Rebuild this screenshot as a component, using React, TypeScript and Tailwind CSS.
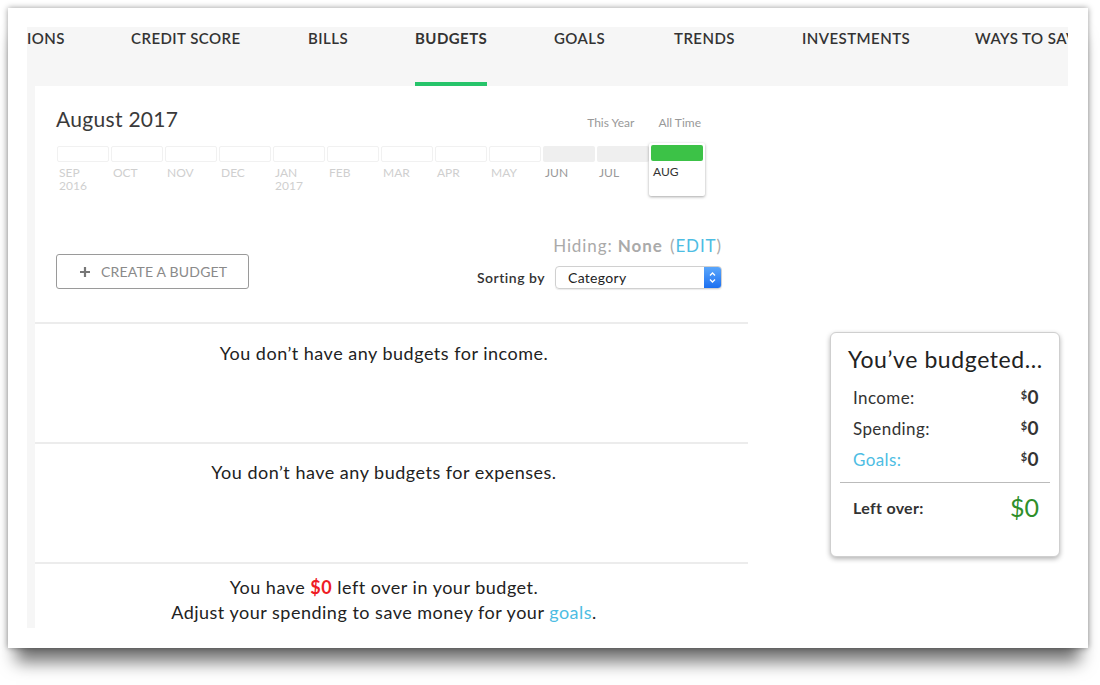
import React from "react";

const months = [
  { m: "SEP", y: "2016", state: "empty" },
  { m: "OCT", state: "empty" },
  { m: "NOV", state: "empty" },
  { m: "DEC", state: "empty" },
  { m: "JAN", y: "2017", state: "empty" },
  { m: "FEB", state: "empty" },
  { m: "MAR", state: "empty" },
  { m: "APR", state: "empty" },
  { m: "MAY", state: "empty" },
  { m: "JUN", state: "gray" },
  { m: "JUL", state: "gray" },
  { m: "AUG", state: "active" },
];

const navItems = [
  { label: "IONS", w: "w-[104px]" },
  { label: "CREDIT SCORE", w: "w-[177px]" },
  { label: "BILLS", w: "w-[107px]" },
  { label: "BUDGETS", w: "w-[139px]", active: true },
  { label: "GOALS", w: "w-[120px]" },
  { label: "TRENDS", w: "w-[128px]" },
  { label: "INVESTMENTS", w: "w-[173px]" },
  { label: "WAYS TO SAVE", w: "w-[140px]" },
];

function Money() {
  return (
    <span className="font-bold text-[#333]">
      <span className="text-[11px] align-[5px]">$</span>
      <span className="text-[19px]">0</span>
    </span>
  );
}

export default function App() {
  return (
    <div
      className="w-[1100px] h-[685px] bg-white overflow-hidden pl-[8px] pt-[8px]"
      style={{ fontFamily: "Lato, 'Noto Sans', sans-serif" }}
    >
      <div className="w-[1080px] h-[640px] bg-white pl-[19px] pr-[20px] pt-[19px] shadow-[0_0_6px_rgba(0,0,0,0.4),0_22px_16px_-8px_rgba(0,0,0,0.55)]">
        <div className="h-[601px] flex flex-col overflow-hidden">
          {/* NAV */}
          <div className="h-[59px] bg-[#f6f6f6] flex overflow-hidden whitespace-nowrap shrink-0">
            {navItems.map((n) => (
              <div key={n.label} className={`${n.w} shrink-0 flex flex-col`}>
                <div className="inline-flex flex-col self-start h-full">
                  <span
                    className={`pt-[1px] text-[15px] leading-[20px] text-[#333] tracking-[0.45px] ${
                      n.active ? "font-bold" : "font-semibold"
                    }`}
                  >
                    {n.label}
                  </span>
                  <div className="flex-1" />
                  {n.active && <div className="h-[4px] bg-[#26c46a]" />}
                </div>
              </div>
            ))}
          </div>

          {/* BODY */}
          <div className="flex flex-1 min-h-0">
            <div className="w-[8px] bg-[#f6f6f6] shrink-0" />
            <div className="flex flex-1 bg-white">
              {/* main column */}
              <div className="w-[713px] shrink-0 flex flex-col">
                <div className="pl-[21px] w-[687px]">
                  {/* header */}
                  <div className="flex items-end justify-between w-[646px] pt-[20px]">
                    <span className="text-[21px] leading-[26px] text-[#3a3a3a] tracking-[0.3px]">August 2017</span>
                    <div className="flex gap-[24px] text-[12px] text-[#999] pr-[1px]">
                      <span>This Year</span>
                      <span>All Time</span>
                    </div>
                  </div>
                  {/* months */}
                  <div className="flex gap-[2px] mt-[14px] pl-[1px]">
                    {months.map((mo) =>
                      mo.state === "active" ? (
                        <div
                          key={mo.m}
                          className="w-[52px] -mt-[3px] -ml-[2px] p-[2px] h-[49px] bg-white rounded-[2px] shadow-[0_1px_3px_rgba(0,0,0,0.35)] box-content"
                        >
                          <div className="h-[16px] bg-[#3cc247] rounded-[2px]" />
                          <div className="text-[12px] leading-[13px] text-[#333] mt-[4px] pl-[2px]">{mo.m}</div>
                        </div>
                      ) : (
                        <div key={mo.m} className="w-[52px]">
                          <div
                            className={`h-[16px] rounded-[2px] ${
                              mo.state === "gray" ? "bg-[#efefef]" : "border border-[#f1f1f1]"
                            }`}
                          />
                          <div
                            className={`text-[12px] leading-[13px] mt-[4px] pl-[2px] ${
                              mo.state === "gray" ? "text-[#999]" : "text-[#cfcfcf]"
                            }`}
                          >
                            {mo.m}
                            {mo.y && <div>{mo.y}</div>}
                          </div>
                        </div>
                      )
                    )}
                  </div>
                  {/* controls */}
                  <div className="flex items-end justify-between w-[666px] mt-[40px]">
                    <button className="w-[193px] h-[35px] border border-[#9a9a9a] rounded-[3px] flex items-center pl-[22px] gap-[10px] text-[14px] text-[#8a8a8a]">
                      <svg width="12" height="12" viewBox="0 0 12 12">
                        <path d="M6 1v10M1 6h10" stroke="#777" strokeWidth="2.2" />
                      </svg>
                      <span className="tracking-[0.2px]">CREATE A BUDGET</span>
                    </button>
                    <div className="flex flex-col items-end">
                      <div className="text-[17px] leading-[20px] text-[#aaa] tracking-[0.9px]">
                        Hiding: <span className="font-bold">None</span>{" "}
                        <span className="ml-[2px]">
                          (<span className="text-[#4dbde3]">EDIT</span>)
                        </span>
                      </div>
                      <div className="flex items-center mt-[10px]">
                        <span className="text-[14px] font-semibold text-[#333] mr-[10px] tracking-[0.5px]">Sorting by</span>
                        <div className="w-[167px] h-[23px] border border-[#d0d0d0] rounded-[4px] flex items-center shadow-[0_1px_1px_rgba(0,0,0,0.08)] overflow-hidden">
                          <span className="flex-1 pl-[12px] text-[14px] text-[#222] tracking-[0.3px]">Category</span>
                          <div className="w-[17px] h-full bg-gradient-to-b from-[#5aa6fb] to-[#1b6ff0] flex items-center justify-center">
                            <svg width="9" height="15" viewBox="0 0 9 15">
                              <path d="M2 5.5L4.5 3L7 5.5M2 9.5L4.5 12L7 9.5" stroke="white" strokeWidth="1.3" fill="none" />
                            </svg>
                          </div>
                        </div>
                      </div>
                    </div>
                  </div>
                </div>

                {/* sections */}
                <div className="mt-[33px] border-t-2 border-[#ececec] h-[120px] pt-[18px] pr-[15px] text-center text-[18px] leading-[22px] tracking-[0.5px] text-[#222]">
                  You don’t have any budgets for income.
                </div>
                <div className="border-t-2 border-[#ececec] h-[120px] pt-[17px] pr-[15px] text-center text-[18px] leading-[22px] tracking-[0.5px] text-[#222]">
                  You don’t have any budgets for expenses.
                </div>
                <div className="border-t-2 border-[#ececec] pt-[11px] pr-[15px] text-center text-[18px] leading-[25px] tracking-[0.5px] text-[#222]">
                  <div>
                    You have <span className="font-bold text-[#ee1c25]">$0</span> left over in your budget.
                  </div>
                  <div>
                    Adjust your spending to save money for your <span className="text-[#4dbde3]">goals</span>.
                  </div>
                </div>
              </div>

              {/* sidebar */}
              <div className="pl-[82px] pt-[246px]">
                <div className="w-[230px] h-[225px] border border-[#cfcfcf] rounded-[6px] bg-white shadow-[0_2px_5px_rgba(0,0,0,0.3)] flex flex-col">
                  <div className="pl-[17px] pt-[12px] text-[23px] leading-[28px] tracking-[0.6px] text-[#222]">You’ve budgeted...</div>
                  <div className="pl-[22px] pr-[20px] mt-[9px] flex flex-col text-[17px] tracking-[0.4px] text-[#333]">
                    <div className="flex justify-between items-center h-[31px]">
                      <span>Income:</span>
                      <Money />
                    </div>
                    <div className="flex justify-between items-center h-[31px]">
                      <span>Spending:</span>
                      <Money />
                    </div>
                    <div className="flex justify-between items-center h-[31px]">
                      <span className="text-[#4dbde3]">Goals:</span>
                      <Money />
                    </div>
                  </div>
                  <div className="mx-[9px] mt-[7px] border-t border-[#bbb]" />
                  <div className="pl-[22px] pr-[20px] flex justify-between items-center h-[50px]">
                    <span className="text-[16px] font-bold text-[#333] tracking-[0.3px]">Left over:</span>
                    <span className="text-[25px] text-[#2f8f2a]">$0</span>
                  </div>
                </div>
              </div>
            </div>
          </div>
        </div>
      </div>
    </div>
  );
}
